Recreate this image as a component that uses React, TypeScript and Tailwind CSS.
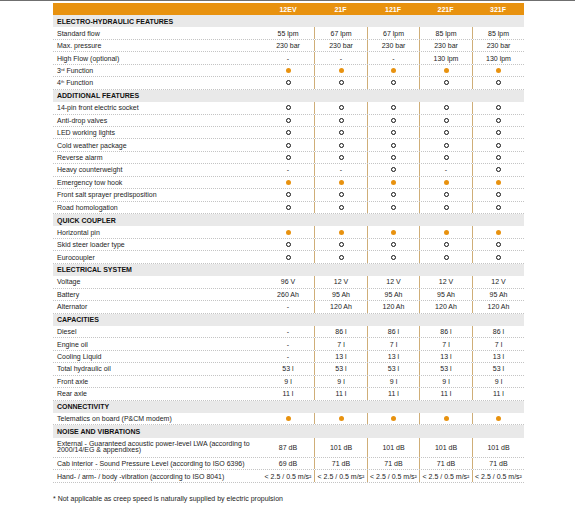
import type { ReactNode } from 'react';

type Row = { label: ReactNode; values: string[]; tall?: boolean };
type Section = { title: string; rows: Row[] };

const models = ['12EV', '21F', '121F', '221F', '321F'];

const all = (v: string) => [v, v, v, v, v];
const evThen = (ev: string, rest: string) => [ev, rest, rest, rest, rest];

const sections: Section[] = [
  {
    title: 'ELECTRO-HYDRAULIC FEATURES',
    rows: [
      { label: 'Standard flow', values: ['55 lpm', '67 lpm', '67 lpm', '85 lpm', '85 lpm'] },
      { label: 'Max. pressure', values: all('230 bar') },
      { label: 'High Flow (optional)', values: ['-', '-', '-', '130 lpm', '130 lpm'] },
      { label: <>3<sup className="text-[4px] top-[-2px]">rd</sup> Function</>, values: all('dot') },
      { label: <>4<sup className="text-[4px] top-[-2px]">th</sup> Function</>, values: all('ring') },
    ],
  },
  {
    title: 'ADDITIONAL FEATURES',
    rows: [
      { label: '14-pin front electric socket', values: all('ring') },
      { label: 'Anti-drop valves', values: all('ring') },
      { label: 'LED working lights', values: all('ring') },
      { label: 'Cold weather package', values: all('ring') },
      { label: 'Reverse alarm', values: all('ring') },
      { label: 'Heavy counterweight', values: ['-', '-', 'ring', '-', 'ring'] },
      { label: 'Emergency tow hook', values: all('dot') },
      { label: 'Front salt sprayer predisposition', values: all('ring') },
      { label: 'Road homologation', values: all('ring') },
    ],
  },
  {
    title: 'QUICK COUPLER',
    rows: [
      { label: 'Horizontal pin', values: all('dot') },
      { label: 'Skid steer loader type', values: all('ring') },
      { label: 'Eurocoupler', values: all('ring') },
    ],
  },
  {
    title: 'ELECTRICAL SYSTEM',
    rows: [
      { label: 'Voltage', values: evThen('96 V', '12 V') },
      { label: 'Battery', values: evThen('260 Ah', '95 Ah') },
      { label: 'Alternator', values: evThen('-', '120 Ah') },
    ],
  },
  {
    title: 'CAPACITIES',
    rows: [
      { label: 'Diesel', values: evThen('-', '86 l') },
      { label: 'Engine oil', values: evThen('-', '7 l') },
      { label: 'Cooling Liquid', values: evThen('-', '13 l') },
      { label: 'Total hydraulic oil', values: all('53 l') },
      { label: 'Front axle', values: all('9 l') },
      { label: 'Rear axle', values: all('11 l') },
    ],
  },
  {
    title: 'CONNECTIVITY',
    rows: [{ label: 'Telematics on board (P&CM modem)', values: all('dot') }],
  },
  {
    title: 'NOISE AND VIBRATIONS',
    rows: [
      {
        label: 'External - Guaranteed acoustic power-level LWA (according to 2000/14/EG & appendixes)',
        values: evThen('87 dB', '101 dB'),
        tall: true,
      },
      { label: 'Cab interior - Sound Pressure Level (according to ISO 6396)', values: evThen('69 dB', '71 dB') },
      { label: 'Hand- / arm- / body -vibration (according to ISO 8041)', values: all('< 2.5 / 0.5 m/s²') },
    ],
  },
];

const cols = 'grid grid-cols-[209px_52px_53px_52px_53px_52px]';

function Cell({ value }: { value: string }) {
  if (value === 'dot') return <span className="w-[5px] h-[5px] rounded-full bg-[#e8920f]" />;
  if (value === 'ring') return <span className="w-[5px] h-[5px] rounded-full border border-[#111]" />;
  return <span>{value}</span>;
}

export default function App() {
  return (
    <div className="w-[575px] h-[520px] bg-white font-['Liberation_Sans',Arial,sans-serif] text-[7px] text-[#1c1c1c] leading-none">
      <div className="h-px bg-[#6f6f6f]" />
      <div className="pl-[53px] pt-[2px]">
        <div className="w-[471px]">
          <div className={`${cols} h-[12px] bg-[#e8920f] text-white font-bold`}>
            <div />
            {models.map(m => (
              <div key={m} className="flex items-center justify-center">{m}</div>
            ))}
          </div>

          {sections.map(section => (
            <div key={section.title}>
              <div className="h-[12.44px] bg-[#e9e9e9] flex items-center pl-[4px] font-bold text-[#111]">
                {section.title}
              </div>
              {section.rows.map((row, i) => (
                <div
                  key={i}
                  className={`${cols} ${row.tall ? 'h-[20px]' : 'h-[12.44px]'} border-b border-dotted border-[#c4c4c4]`}
                >
                  <div className={`flex items-center pl-[4px] pr-[4px] ${row.tall ? 'leading-[6.4px]' : ''}`}>
                    <span>{row.label}</span>
                  </div>
                  {row.values.map((v, j) => (
                    <div
                      key={j}
                      className={`flex items-center justify-center whitespace-nowrap ${j > 0 ? 'border-l border-[#cfae78]' : ''}`}
                    >
                      <Cell value={v} />
                    </div>
                  ))}
                </div>
              ))}
            </div>
          ))}

          <p className="mt-[12px]">* Not applicable as creep speed is naturally supplied by electric propulsion</p>
        </div>
      </div>
    </div>
  );
}
